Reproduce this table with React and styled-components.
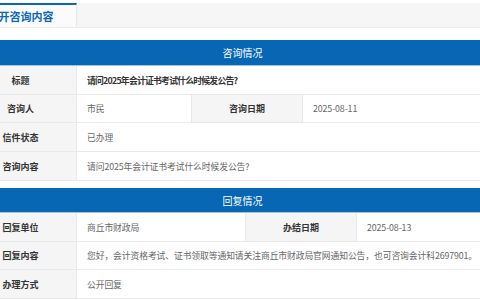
import styled, { createGlobalStyle } from 'styled-components';

const Global = createGlobalStyle`
  html, body { margin: 0; padding: 0; background: #fff; overflow: hidden; }
  body { font-family: "Noto Sans CJK SC", "Noto Sans", sans-serif; }
`;

const data = {
  consult: {
    title: '请问2025年会计证书考试什么时候发公告?',
    person: '市民',
    date: '2025-08-11',
    status: '已办理',
    content: '请问2025年会计证书考试什么时候发公告?',
  },
  reply: {
    unit: '商丘市财政局',
    date: '2025-08-13',
    content: '您好，会计资格考试、证书领取等通知请关注商丘市财政局官网通知公告，也可咨询会计科2697901。',
    method: '公开回复',
  },
};

const Page = styled.div`
  width: 555px;
  margin-left: -35px;
  padding-top: 3px;
`;

const TabBar = styled.div`
  display: flex;
  height: 24px;
  background: #f6f6f6;
  border-bottom: 1px solid #ececec;
`;

const Tab = styled.div`
  width: 112px;
  box-sizing: border-box;
  border-top: 2px solid #0a67b5;
  border-right: 1px solid #e8e8e8;
  background: #fbfbfb;
  color: #0a67b5;
  font-size: 11px;
  font-weight: 700;
  display: flex;
  align-items: center;
  justify-content: center;
`;

const Section = styled.section`
  margin-top: ${p => p.$gap}px;
`;

const Head = styled.div`
  height: ${p => p.$h}px;
  box-sizing: border-box;
  background: #0867b4;
  border-bottom: 1px solid #9cc4e6;
  color: #fff;
  font-size: 10px;
  display: flex;
  align-items: center;
  justify-content: center;
`;

const Row = styled.div`
  display: grid;
  grid-template-columns: ${p => p.$cols};
  height: ${p => p.$h || 29}px;
  box-sizing: border-box;
  border-bottom: 1px solid #e9e9e9;
`;

const Label = styled.div`
  background: #f5f5f5;
  border-right: 1px solid #e9e9e9;
  color: #333;
  font-size: 9px;
  font-weight: 700;
  display: flex;
  align-items: center;
  justify-content: center;
`;

const Value = styled.div`
  padding-left: 10px;
  color: ${p => (p.$strong ? '#333' : '#666')};
  font-size: 8.8px;
  font-weight: ${p => (p.$strong ? 700 : 400)};
  letter-spacing: ${p => (p.$strong ? '-0.75px' : '-0.1px')};
  display: flex;
  align-items: center;
  white-space: nowrap;
  grid-column: ${p => (p.$wide ? '2 / -1' : 'auto')};
  border-right: ${p => (p.$split ? '1px solid #e9e9e9' : 'none')};
`;

const colsA = '112px 115px 111px 1fr';
const colsB = '112px 169px 111px 1fr';

export default function App() {
  const c = data.consult;
  const r = data.reply;
  return (
    <Page>
      <Global />
      <TabBar>
        <Tab>公开咨询内容</Tab>
      </TabBar>

      <Section $gap={12}>
        <Head $h={26}>咨询情况</Head>
        <Row $cols={colsA}>
          <Label>标题</Label>
          <Value $wide $strong>{c.title}</Value>
        </Row>
        <Row $cols={colsA} $h={28}>
          <Label>咨询人</Label>
          <Value $split>{c.person}</Value>
          <Label>咨询日期</Label>
          <Value>{c.date}</Value>
        </Row>
        <Row $cols={colsA}>
          <Label>信件状态</Label>
          <Value $wide>{c.status}</Value>
        </Row>
        <Row $cols={colsA}>
          <Label>咨询内容</Label>
          <Value $wide>{c.content}</Value>
        </Row>
      </Section>

      <Section $gap={7}>
        <Head $h={25}>回复情况</Head>
        <Row $cols={colsB}>
          <Label>回复单位</Label>
          <Value $split>{r.unit}</Value>
          <Label>办结日期</Label>
          <Value>{r.date}</Value>
        </Row>
        <Row $cols={colsB} $h={28}>
          <Label>回复内容</Label>
          <Value $wide>{r.content}</Value>
        </Row>
        <Row $cols={colsB}>
          <Label>办理方式</Label>
          <Value $wide>{r.method}</Value>
        </Row>
      </Section>
    </Page>
  );
}
